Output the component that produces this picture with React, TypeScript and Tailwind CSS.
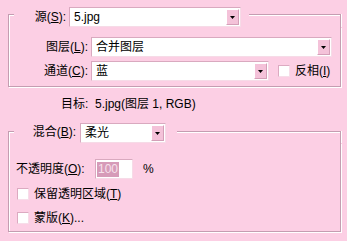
import React from "react";

const Arrow = () => (
  <div className="my-[1px] mr-[1px] w-[13px] flex items-center justify-center bg-[#f4c2d9] border border-t-white border-l-white border-r-[#d49fb8] border-b-[#d49fb8]">
    <svg width="5" height="3" viewBox="0 0 5 3">
      <path d="M0 0h5L2.5 3z" fill="#000" />
    </svg>
  </div>
);

const Select = ({ value, w }: { value: string; w: string }) => (
  <div
    className={`${w} h-[20px] flex bg-white border border-t-[#d9a9bf] border-l-[#d9a9bf] border-r-[#f6dbe7] border-b-[#f6dbe7]`}
  >
    <span className="flex-1 pl-[4px] leading-[18px]">{value}</span>
    <Arrow />
  </div>
);

const Check = () => (
  <div className="w-[12px] h-[12px] bg-white border border-t-[#dcaac1] border-l-[#dcaac1] border-r-[#f7dde9] border-b-[#f7dde9]" />
);

const U = ({ c }: { c: string }) => <span className="underline">{c}</span>;

// group header: short line, legend content, long line
const GroupHead = ({
  children,
  lineTop,
}: {
  children: React.ReactNode;
  lineTop: string;
}) => (
  <div className="flex items-stretch">
    <div
      className={`w-[6px] ${lineTop} border-t border-l border-[#c49db1] shadow-[inset_1px_1px_0_#fff]`}
    />
    {children}
    <div
      className={`flex-1 ${lineTop} border-t border-r border-[#c49db1] shadow-[inset_0_1px_0_#fff,1px_0_0_#fff]`}
    />
  </div>
);

export default function App() {
  return (
    <div className="w-[347px] h-[241px] bg-[#fccfe4] pt-[7px] pl-[8px] text-[12px] text-black font-['Liberation_Sans','Noto_Sans_CJK_SC',sans-serif] overflow-hidden">
      <div className="w-[333px]">
        {/* source group */}
        <GroupHead lineTop="mt-[7px]">
          <div className="w-[55px] pr-[3px] text-right leading-[20px] h-[20px]">
            源(<U c="S" />):
          </div>
          <Select value="5.jpg" w="w-[172px]" />
          <div className="w-[8px]" />
        </GroupHead>
        <div className="border-l border-r border-b border-[#c49db1] shadow-[inset_1px_0_0_#fff,1px_1px_0_#fff] pt-[10px] pb-[5px]">
          <div className="flex">
            <div className="w-[82px] pr-[3px] text-right leading-[20px]">
              图层(<U c="L" />):
            </div>
            <Select value="合并图层" w="w-[241px]" />
          </div>
          <div className="flex items-center mt-[4px]">
            <div className="w-[82px] pr-[3px] text-right leading-[20px]">
              通道(<U c="C" />):
            </div>
            <Select value="蓝" w="w-[178px]" />
            <div className="ml-[9px]">
              <Check />
            </div>
            <span className="ml-[5px]">
              反相(<U c="I" />)
            </span>
          </div>
        </div>

        {/* target */}
        <div className="mt-[7px] h-[20px] leading-[20px] pl-[53px]">
          目标:&nbsp; 5.jpg(图层 1, RGB)
        </div>

        {/* blend group */}
        <div className="mt-[9px]">
          <GroupHead lineTop="mt-[8px]">
            <div className="w-[66px] pr-[4px] text-right leading-[19px] h-[19px]">
              混合(<U c="B" />):
            </div>
            <Select value="柔光" w="w-[86px] h-[19px]" />
            <div className="w-[11px]" />
          </GroupHead>
          <div className="border-l border-r border-b border-[#c49db1] shadow-[inset_1px_0_0_#fff,1px_1px_0_#fff] pt-[16px] pb-[5px]">
            <div className="flex items-center h-[20px] pl-[7px]">
              <span className="w-[79px]">
                不透明度(<U c="O" />):
              </span>
              <div className="w-[38px] h-[20px] bg-white border border-t-[#d9a9bf] border-l-[#d9a9bf] border-r-[#f6dbe7] border-b-[#f6dbe7] flex items-center pl-[1px]">
                <span className="bg-[#d69bb8] text-[#f6e2ec] leading-[15px] px-[1px]">100</span>
              </div>
              <span className="ml-[10px]">%</span>
            </div>
            <div className="flex items-center h-[16px] mt-[7px] pl-[8px]">
              <Check />
              <span className="ml-[5px]">
                保留透明区域(<U c="T" />)
              </span>
            </div>
            <div className="flex items-center h-[16px] mt-[8px] pl-[8px]">
              <Check />
              <span className="ml-[5px]">
                蒙版(<U c="K" />)...
              </span>
            </div>
          </div>
        </div>
      </div>
    </div>
  );
}
